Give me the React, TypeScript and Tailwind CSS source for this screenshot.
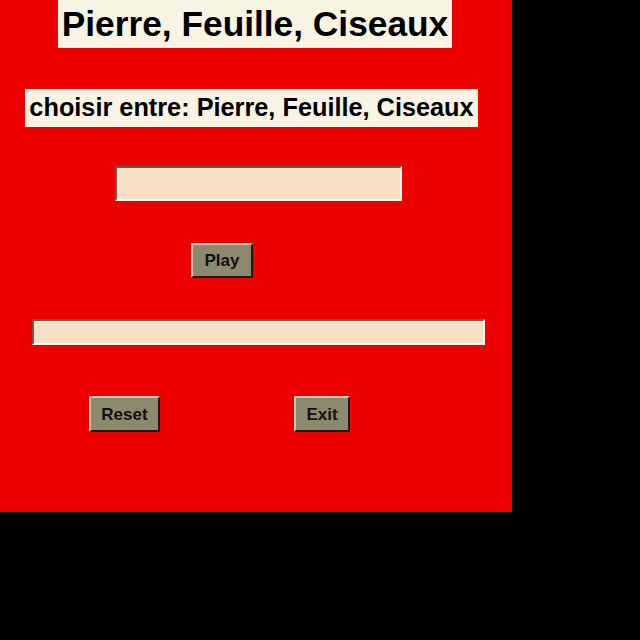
import React from 'react';

const raised =
  'border-2 border-t-[#c9c9b4] border-l-[#c9c9b4] border-b-[#1a1a10] border-r-[#1a1a10] bg-[#8c8a6e] text-[#111] font-bold text-[17px] leading-none';

const sunken =
  'border-2 border-t-[#6b5a4a] border-l-[#6b5a4a] border-b-[#fff5f0] border-r-[#fff5f0] bg-[#f7dfc6]';

export default function App() {
  return (
    <div className="w-[640px] h-[640px] bg-black" style={{ fontFamily: '"Liberation Sans", Arial, sans-serif' }}>
      <div className="w-[512px] h-[512px] bg-[#ec0000] flex flex-col items-start">
        <h1 className="ml-[58px] w-[394px] h-[48px] bg-[#f7f4e4] flex items-center justify-center text-[35.3px] font-bold text-black leading-none">
          Pierre, Feuille, Ciseaux
        </h1>

        <div className="ml-[25px] mt-[41px] w-[453px] h-[38px] bg-[#f7f4e4] flex items-center justify-center text-[25.3px] font-bold text-black leading-none">
          choisir entre: Pierre, Feuille, Ciseaux
        </div>

        <input className={`ml-[115px] mt-[39px] w-[287px] h-[35px] outline-none ${sunken}`} />

        <button className={`ml-[191px] mt-[42px] w-[62px] h-[35px] ${raised}`}>Play</button>

        <input className={`ml-[32px] mt-[41px] w-[453px] h-[26px] outline-none ${sunken}`} />

        <div className="mt-[51px] flex">
          <button className={`ml-[89px] w-[71px] h-[36px] ${raised}`}>Reset</button>
          <button className={`ml-[134px] w-[56px] h-[36px] ${raised}`}>Exit</button>
        </div>
      </div>
    </div>
  );
}
